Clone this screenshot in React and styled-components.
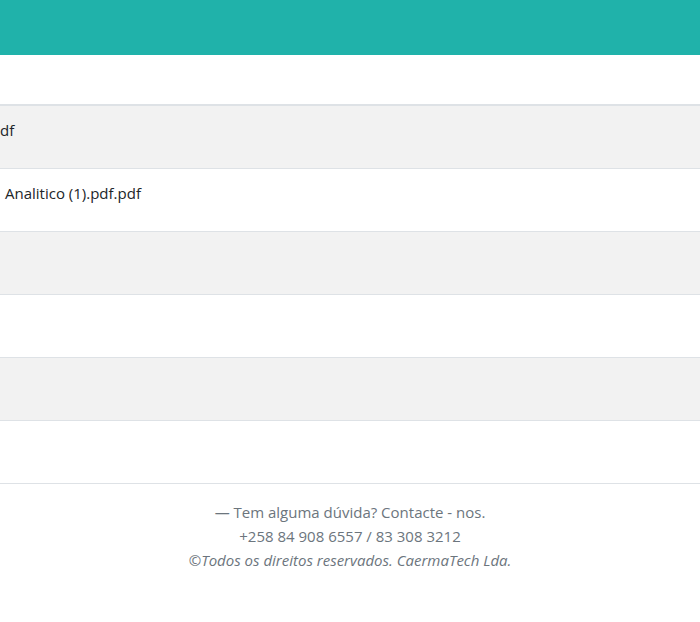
import React from 'react';
import styled, { createGlobalStyle } from 'styled-components';

const GlobalStyle = createGlobalStyle`
  body {
    margin: 0;
    background: #ffffff;
    font-family: 'Open Sans', 'Noto Sans', sans-serif;
    color: #212529;
  }
`;

const TopBar = styled.header`
  height: 55px;
  background-color: #20b2aa;
`;

const Table = styled.table`
  width: 100%;
  border-collapse: collapse;
  font-size: 15px;
`;

const HeadRow = styled.tr`
  height: 50px;
  border-bottom: 2px solid #dee2e6;
`;

const Row = styled.tr`
  height: 63px;
  background-color: ${(p) => (p.striped ? '#f2f2f2' : '#ffffff')};
  border-bottom: 1px solid #dee2e6;
`;

const Cell = styled.td`
  padding: 13px 0 0 ${(p) => p.indent || 0}px;
  vertical-align: top;
  line-height: 22px;
`;

const Footer = styled.footer`
  padding-top: 16px;
  text-align: center;
  color: #6c757d;
  font-size: 15px;
  line-height: 24px;
`;

const Line = styled.div`
  font-style: ${(p) => (p.italic ? 'italic' : 'normal')};
`;

const rows = [
  { name: 'df', indent: 0 },
  { name: 'Analitico (1).pdf.pdf', indent: 5 },
  { name: '' },
  { name: '' },
  { name: '' },
  { name: '' },
];

export default function App() {
  return (
    <>
      <GlobalStyle />
      <TopBar />
      <Table>
        <thead>
          <HeadRow>
            <th></th>
          </HeadRow>
        </thead>
        <tbody>
          {rows.map((r, i) => (
            <Row key={i} striped={i % 2 === 0}>
              <Cell indent={r.indent}>{r.name}</Cell>
            </Row>
          ))}
        </tbody>
      </Table>
      <Footer>
        <Line>— Tem alguma dúvida? Contacte - nos.</Line>
        <Line>+258 84 908 6557 / 83 308 3212</Line>
        <Line italic>©Todos os direitos reservados. CaermaTech Lda.</Line>
      </Footer>
    </>
  );
}
